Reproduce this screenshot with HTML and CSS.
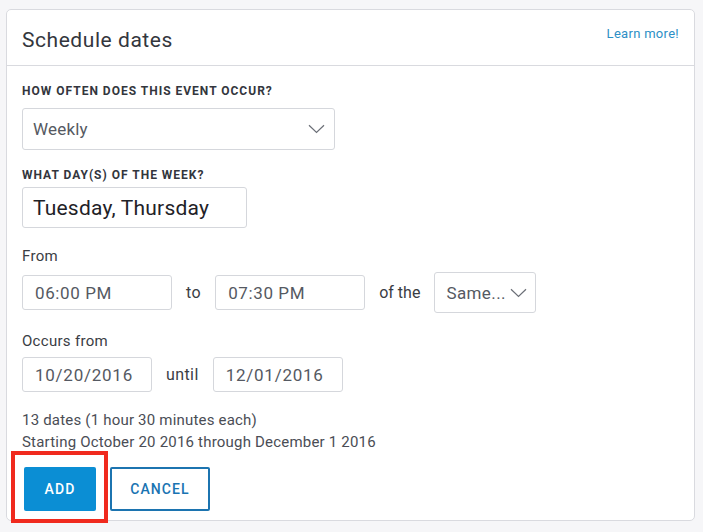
FILE: index.html
```html
<!DOCTYPE html>
<html>
<head>
<meta charset="utf-8">
<link rel="stylesheet" href="styles.css">
</head>
<body>
<div class="card">
  <div class="card-head">
    <h1 class="title">Schedule dates</h1>
    <a class="learn">Learn more!</a>
  </div>
  <div class="card-body">
    <div class="label">HOW OFTEN DOES THIS EVENT OCCUR?</div>
    <div class="select freq">
      <span class="sel-text">Weekly</span>
      <svg class="chev" width="17" height="10" viewBox="0 0 17 10"><path d="M1 1.2 L8.5 8.5 L16 1.2" fill="none" stroke="#6b6f77" stroke-width="1.2"/></svg>
    </div>
    <div class="label label2">WHAT DAY(S) OF THE WEEK?</div>
    <div class="days">Tuesday, Thursday</div>

    <div class="text from">From</div>
    <div class="row time-row">
      <div class="box time">06:00 PM</div>
      <span class="word word-to">to</span>
      <div class="box time">07:30 PM</div>
      <span class="word">of the</span>
      <div class="select same">
        <span class="sel-text">Same...</span>
        <svg class="chev" width="17" height="10" viewBox="0 0 17 10"><path d="M1 1.2 L8.5 8.5 L16 1.2" fill="none" stroke="#6b6f77" stroke-width="1.2"/></svg>
      </div>
    </div>

    <div class="text occurs">Occurs from</div>
    <div class="row date-row">
      <div class="box date">10/20/2016</div>
      <span class="word word-until">until</span>
      <div class="box date">12/01/2016</div>
    </div>

    <div class="summary">
      <div>13 dates (1 hour 30 minutes each)</div>
      <div>Starting October 20 2016 through December 1 2016</div>
    </div>

    <div class="actions">
      <button class="btn btn-add">ADD</button>
      <button class="btn btn-cancel">CANCEL</button>
    </div>
  </div>
</div>
<div class="highlight"></div>
</body>
</html>
```
FILE: styles.css
```css
* { box-sizing: border-box; }
html, body { margin: 0; padding: 0; }
body {
  background: #f6f6f8;
  font-family: Roboto, "Liberation Sans", sans-serif;
  color: #3a3d44;
  width: 703px;
  height: 532px;
  overflow: hidden;
  position: relative;
}
.card {
  position: absolute;
  left: 6px;
  top: 9px;
  width: 689px;
  height: 512px;
  background: #fff;
  border: 1px solid #d9dadf;
  border-radius: 5px;
}
.card-head {
  height: 56px;
  border-bottom: 1px solid #d9dadf;
  display: flex;
  align-items: center;
  justify-content: space-between;
  padding: 0 15px 0 15px;
}
.title {
  margin: 0;
  font-size: 21px;
  font-weight: 400;
  color: #33363d;
  letter-spacing: 0.55px;
  padding-top: 4px;
}
.learn {
  font-size: 13px;
  color: #2d8fc6;
  letter-spacing: 0.3px;
  padding-bottom: 8px;
}
.card-body {
  padding: 18px 15px 0 15px;
}
.label {
  font-size: 12px;
  line-height: 15px;
  font-weight: 700;
  letter-spacing: 1px;
  color: #33363d;
}
.select {
  border: 1px solid #d5d7dc;
  border-radius: 3px;
  display: flex;
  align-items: center;
  justify-content: space-between;
}
.freq {
  margin-top: 9px;
  width: 313px;
  height: 42px;
  padding: 0 9px 0 10px;
}
.sel-text {
  font-size: 17px;
  letter-spacing: 0.2px;
  color: #555962;
}
.label2 { margin-top: 18px; }
.days {
  margin-top: 4px;
  width: 225px;
  height: 41px;
  border: 1px solid #d5d7dc;
  border-radius: 3px;
  font-size: 21px;
  letter-spacing: 0.2px;
  color: #1f2227;
  display: flex;
  align-items: center;
  padding-left: 10px;
}
.text {
  font-size: 15px;
  line-height: 20px;
  letter-spacing: 0.3px;
  color: #3a3d44;
}
.from { margin-top: 18px; }
.row {
  display: flex;
  align-items: center;
  gap: 14px;
}
.time-row { margin-top: 6px; height: 41px; }
.box {
  border: 1px solid #d5d7dc;
  border-radius: 3px;
  height: 35px;
  display: flex;
  align-items: center;
  padding-left: 12px;
  font-size: 17px;
  letter-spacing: 0.6px;
  color: #555962;
}
.time { width: 150px; }
.word { font-size: 16px; letter-spacing: 0; color: #3a3d44; }
.word-to { letter-spacing: 0.5px; }
.word-until { letter-spacing: 0.4px; }
.same {
  width: 102px;
  height: 41px;
  padding: 0 8px 0 11px;
}
.same .sel-text { letter-spacing: 0.4px; }
.occurs { margin-top: 18px; }
.date-row { margin-top: 6px; }
.date { width: 130px; padding-left: 12px; letter-spacing: 0.75px; }
.summary {
  margin-top: 17px;
  font-size: 15px;
  line-height: 22px;
  letter-spacing: 0.2px;
  color: #4a4d55;
}
.actions {
  margin-top: 14px;
  display: flex;
  gap: 14px;
}
.btn {
  height: 44px;
  font-family: Roboto, "Liberation Sans", sans-serif;
  font-size: 14px;
  font-weight: 500;
  letter-spacing: 1.1px;
  border-radius: 2px;
  cursor: pointer;
}
.btn-add {
  width: 72px;
  margin-left: 2px;
  background: #0b8ed4;
  color: #fff;
  border: none;
}
.btn-cancel {
  width: 100px;
  background: #fff;
  color: #1a74b2;
  border: 2px solid #1c74b0;
}
.highlight {
  position: absolute;
  left: 11px;
  top: 451px;
  width: 97px;
  height: 72px;
  border: 4px solid #f02a1e;
}
```
